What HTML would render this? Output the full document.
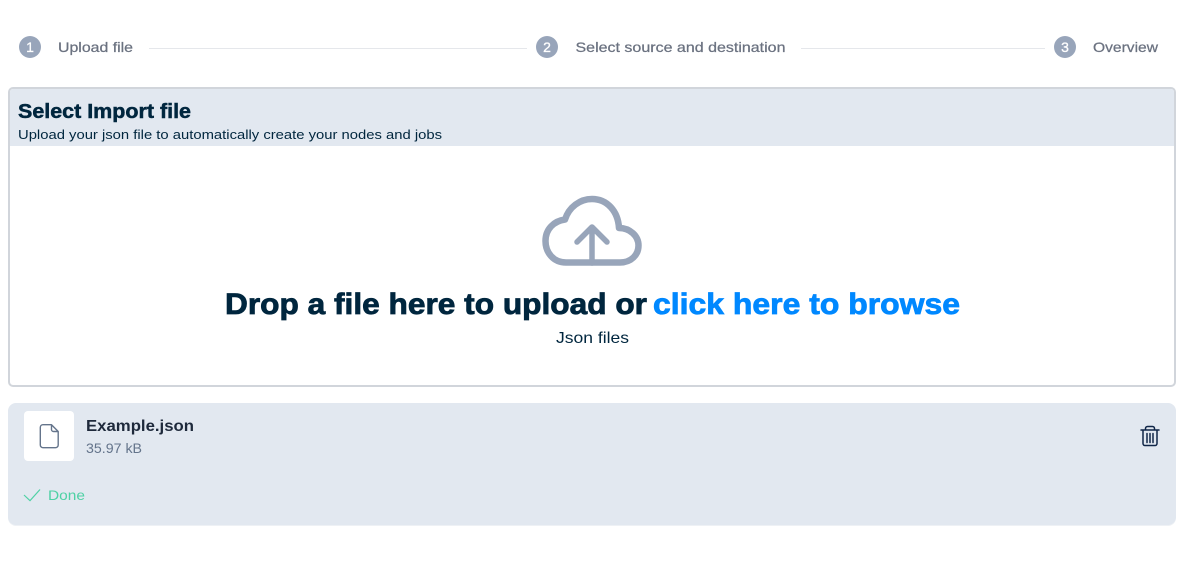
<!DOCTYPE html>
<html><head><meta charset="utf-8"><style>
html,body{margin:0;padding:0;background:#fff;width:1181px;height:573px;overflow:hidden}
svg{display:block}
text{font-family:"Liberation Sans",sans-serif}
</style></head><body>
<svg width="1181" height="573" viewBox="0 0 1181 573" xmlns="http://www.w3.org/2000/svg">
<rect width="1181" height="573" fill="#fff"/>
<g fill="#98a5ba"><circle cx="30" cy="47" r="11"/><circle cx="547" cy="47" r="11"/><circle cx="1065" cy="47" r="11"/></g>
<g fill="#fff" font-size="14" text-anchor="middle" stroke="#fff" stroke-width=".3"><text x="30" y="52">1</text><text x="547" y="52">2</text><text x="1065" y="52">3</text></g>
<g fill="#6b7280" font-size="14" stroke="#6b7280" stroke-width=".25">
<text x="58" y="52" textLength="75" lengthAdjust="spacingAndGlyphs">Upload file</text>
<text x="575.5" y="52" textLength="210" lengthAdjust="spacingAndGlyphs">Select source and destination</text>
<text x="1093" y="52" textLength="65" lengthAdjust="spacingAndGlyphs">Overview</text>
</g>
<g fill="#e5e7eb"><rect x="149" y="48" width="378" height="1"/><rect x="801" y="48" width="244" height="1"/></g>
<rect x="9" y="88" width="1166" height="298" rx="4" fill="#fff" stroke="#d1d5db" stroke-width="2"/>
<path d="M10 146V92a3 3 0 0 1 3-3H1171a3 3 0 0 1 3 3V146Z" fill="#e2e8f0"/>
<text x="18" y="118" font-size="20" font-weight="700" fill="#00263e" stroke="#00263e" stroke-width=".5" textLength="173" lengthAdjust="spacingAndGlyphs">Select Import file</text>
<text x="18" y="139" font-size="13" fill="#00263e" textLength="424" lengthAdjust="spacingAndGlyphs">Upload your json file to automatically create your nodes and jobs</text>
<path d="M566 262.5C553 262.5 545.5 252 545.5 241C545.5 229 554 221 565 219.5C569 207 580 199 592 199C607 199 618 211 619 228C630 228 638.5 236 638.5 245.5C638.5 255 631 262.5 620 262.5Z" fill="none" stroke="#98a5ba" stroke-width="6.5" stroke-linejoin="round"/>
<path d="M592 229V263M577 242L592 227L607 242" fill="none" stroke="#98a5ba" stroke-width="5.5" stroke-linecap="round" stroke-linejoin="round"/>
<text x="225" y="314" font-size="30" font-weight="700" fill="#00263e" stroke="#00263e" stroke-width=".8" textLength="422" lengthAdjust="spacingAndGlyphs">Drop a file here to upload or</text>
<text x="653" y="314" font-size="30" font-weight="700" fill="#0088ff" stroke="#0088ff" stroke-width=".8" textLength="307" lengthAdjust="spacingAndGlyphs">click here to browse</text>
<text x="556" y="343" font-size="16" fill="#00263e" textLength="73" lengthAdjust="spacingAndGlyphs">Json files</text>
<rect x="8" y="404" width="1168" height="122" rx="8" fill="#eef1f5"/>
<rect x="8" y="403" width="1168" height="122" rx="8" fill="#e2e8f0"/>
<rect x="24" y="411" width="50" height="50" rx="4" fill="#fff"/>
<path d="M51.5 424.7H43a2.7 2.7 0 0 0-2.7 2.7V445a2.7 2.7 0 0 0 2.7 2.7H55.5a2.7 2.7 0 0 0 2.7-2.7V431.5ZM51.5 424.7V429.5a2 2 0 0 0 2 2H58.2" fill="none" stroke="#64748b" stroke-width="1.4" stroke-linejoin="round"/>
<text x="86" y="431" font-size="16" font-weight="700" fill="#1e293b" textLength="108" lengthAdjust="spacingAndGlyphs">Example.json</text>
<text x="86" y="453" font-size="14" fill="#64748b" textLength="56" lengthAdjust="spacingAndGlyphs">35.97 kB</text>
<path d="M24 495L30 500.7L40 489.5" fill="none" stroke="#4fd1a5" stroke-width="1.2"/>
<text x="48" y="500" font-size="14" fill="#4fd1a5" textLength="37" lengthAdjust="spacingAndGlyphs">Done</text>
<path d="M1141 430H1159M1145.5 430V428.5a2 2 0 0 1 2-2H1152.5a2 2 0 0 1 2 2V430M1143 430V443.5a2 2 0 0 0 2 2H1155a2 2 0 0 0 2-2V430M1147 433.5V442.5M1150 433.5V442.5M1153 433.5V442.5" fill="none" stroke="#0f2547" stroke-width="1.5" stroke-linecap="round"/>
</svg>
</body></html>
